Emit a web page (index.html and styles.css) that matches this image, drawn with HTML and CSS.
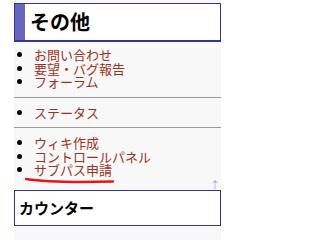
FILE: index.html
```html
<!DOCTYPE html>
<html lang="ja">
<head>
<meta charset="utf-8">
<link rel="stylesheet" href="styles.css">
</head>
<body>
<div class="side">
  <a class="top-prev" href="#">↑</a>
  <h2 class="head">その他</h2>
  <ul class="links first">
    <li><a href="#">お問い合わせ</a></li>
    <li><a href="#">要望・バグ報告</a></li>
    <li><a href="#">フォーラム</a></li>
  </ul>
  <hr class="sep">
  <ul class="links">
    <li><a href="#">ステータス</a></li>
  </ul>
  <hr class="sep">
  <ul class="links">
    <li><a href="#">ウィキ作成</a></li>
    <li><a href="#">コントロールパネル</a></li>
    <li><a href="#">サブパス申請</a></li>
  </ul>
  <div class="totop"><a href="#">↑</a></div>
  <svg class="mark" width="92" height="8" viewBox="0 0 92 8"><path d="M1 2 C 20 5, 50 5.5, 88 4.5" stroke="#e8141c" stroke-width="2.4" fill="none" stroke-linecap="round"/></svg>
  <h3 class="box">カウンター</h3>
</div>
</body>
</html>
```

FILE: styles.css
```css
html, body {
  margin: 0;
  padding: 0;
  background: #fff;
}
body {
  font-family: "Noto Sans CJK JP", "Noto Sans", sans-serif;
  color: #000;
}
.side {
  position: relative;
  margin-left: 14px;
  width: 207px;
  height: 240px;
  padding-top: 3px;
  box-sizing: border-box;
  background: #f8f8f8;
}
.top-prev {
  position: absolute;
  right: 1px;
  top: -12px;
  font-size: 10px;
  line-height: 14px;
  color: #a898d8;
  text-decoration: none;
}
.head {
  margin: 0;
  font-size: 20px;
  line-height: 24px;
  font-weight: bold;
  background: #fff;
  border: 1px solid #333399;
  border-bottom-width: 2px;
  box-shadow: inset 10px 0 0 #6666bb;
  padding: 6px 5px 6px 15px;
}
.links {
  margin: 0;
  padding-left: 20px;
  font-size: 13px;
  line-height: 13.5px;
}
.links.first {
  margin-top: 6px;
}
.links a {
  color: #9c3222;
  text-decoration: none;
}
.sep {
  margin: 8px 0 8px;
  border: 0;
  height: 1px;
  background: #9a9a9a;
}
.totop {
  height: 13px;
  text-align: right;
  padding-right: 1px;
  font-size: 10px;
  line-height: 16px;
}
.totop a {
  color: #a898d8;
  text-decoration: none;
}
.mark {
  position: absolute;
  left: 11px;
  top: 177px;
}
.box {
  margin: 0;
  font-size: 15px;
  line-height: 20px;
  font-weight: bold;
  background: #fff;
  border: 1px solid #333399;
  padding: 7px 4px 7px 4px;
}
```
